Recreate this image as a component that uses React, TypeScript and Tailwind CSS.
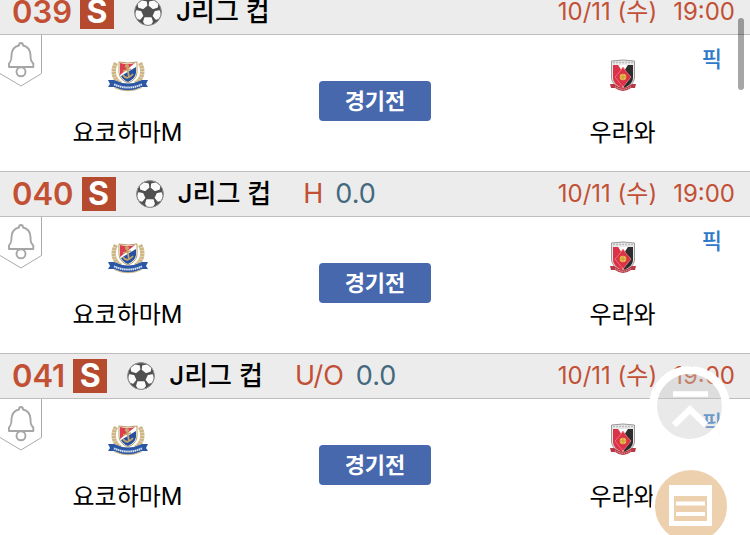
import React from "react";

type Match = { id: string; league: string; kind?: string; line?: string };

const matches: Match[] = [
  { id: "039", league: "J리그 컵" },
  { id: "040", league: "J리그 컵", kind: "H", line: "0.0" },
  { id: "041", league: "J리그 컵", kind: "U/O", line: "0.0" },
];

function Ball() {
  return (
    <svg viewBox="0 0 28 28" className="h-7 w-7 shrink-0" aria-hidden="true">
      <circle cx="14" cy="14" r="13.5" fill="#505050" />
      <g fill="#fafafa" stroke="#fafafa" strokeWidth="1.8" strokeLinejoin="round">
        <path d="M8 3.4 12 4.2 12.4 7.4 8.800 10.2 5 9 4.600 6Z" />
        <path d="M20 3.4 16 4.2 15.6 7.4 19.200 10.2 23 9 23.400 6Z" />
        <path d="M2.8 13.2 6.600 13.8 8.400 17.8 6 20.8 3.600 19.800 2 16.4Z" />
        <path d="M25.2 13.2 21.4 13.8 19.600 17.8 22 20.8 24.400 19.800 26 16.4Z" />
        <path d="M11 20.2H17L18 23.800 16.400 26H11.600L10 23.800Z" />
      </g>
      <circle cx="14" cy="14" r="13.4" fill="none" stroke="#909090" strokeWidth="1" />
    </svg>
  );
}

function YokohamaCrest() {
  return (
    <svg viewBox="0 0 42 32" className="h-8 w-[42px]" role="img" aria-label="요코하마M">
      <g fill="none" stroke="#cdb683" strokeWidth="4.4" strokeDasharray="2.6 .4">
        <path d="M9 3C5 10 6 19 14 24" />
        <path d="M33 3C37 10 36 19 28 24" />
      </g>
      <path d="M12 2Q21 4 30 2V13Q29 20 21 23Q13 20 12 13Z" fill="#fff" stroke="#b69a60" strokeWidth="1" />
      <path d="M13 3Q21 5 28 3L13 15Z" fill="#dc3e50" />
      <path d="M29 7V13Q28 19 21 22Q16 20 14 16Z" fill="#2550a0" />
      <g fill="none" stroke="#c6a769" strokeWidth="1.8">
        <path d="M20 6 22 17M16 11 24 9M16 15Q20 21 26 14" />
        <circle cx="20" cy="6" r="1.2" />
      </g>
      <path d="M1 20 7 20Q21 27 35 20L41 20 39 24 41 27 35 27Q21 34 7 27L1 27 3 24Z" fill="#2956a5" />
      <path d="M7 24.4Q21 30.6 35 24.4" fill="none" stroke="#dfe6f2" strokeWidth="2" strokeDasharray="1.6 .5" />
      <path d="M7 27.5Q21 34 35 27.5" fill="none" stroke="#c5ab75" strokeWidth=".9" />
    </svg>
  );
}

function UrawaCrest() {
  return (
    <svg viewBox="0 0 28 34" className="h-[34px] w-7" role="img" aria-label="우라와">
      <path d="M2.500 2Q14 0 25.500 2V19Q25 26 14 31Q3 26 2.500 19Z" fill="#e9e9e9" stroke="#9a9a9a" strokeWidth="1" />
      <path d="M4 6H9L13 12V29Q4 25 4 19Z" fill="#dc3247" />
      <path d="M19 6H24V19Q24 25 15 29V12Z" fill="#2d2d2d" />
      <path d="M10 6H18L15 12H13Z" fill="#fff" />
      <path d="M4 3.5H24" stroke="#bbb" strokeWidth="1.4" strokeDasharray="2 1" />
      <path d="M14 8 17.500 13 22 18 18 23 14 28 10 23 6 18 10.500 13Z" fill="#dc3247" stroke="#f07a86" strokeWidth=".8" />
      <circle cx="14" cy="18" r="3.3" fill="#e6bd4a" />
      <path d="M11 18H17M14 15V21" stroke="#c08a35" strokeWidth=".6" />
      <path d="M1 25 5 25Q14 32 23 25L27 25 26 29 22 29Q14 35 6 29L2 29Z" fill="#b83945" />
      <path d="M6 27.5Q14 33 22 27.5" fill="none" stroke="#e3b3b3" strokeWidth="1" strokeDasharray="1.5 .8" />
    </svg>
  );
}

function AlarmButton() {
  return (
    <button type="button" aria-label="알림" className="absolute left-0 top-0 h-[52px] w-[43px]">
      <svg viewBox="0 0 43 52" className="h-[52px] w-[43px]" fill="none">
        <path d="M41.5 0V38.500L21 51 0 38.500" stroke="#aaa" strokeWidth="1" />
        <g stroke="#a6a6a6" strokeWidth="1.9" strokeLinejoin="round">
          <path d="M19 10.500Q19 8 21 8Q23 8 23 10.500Q30 12 30.500 20C30.500 25 31 26 33.300 28.500V32H9V28.500C11 26 11.500 25 11.500 20Q12 12 19 10.500Z" />
          <circle cx="21" cy="36.800" r="4.500" />
        </g>
      </svg>
    </button>
  );
}

function Team({ name, children }: { name: string; children: React.ReactNode }) {
  return (
    <div className="flex flex-col items-center pt-6">
      <div className="flex h-[34px] items-center">{children}</div>
      <p className="mt-5 text-2xl leading-10 text-black">{name}</p>
    </div>
  );
}

function MatchRow({ match }: { match: Match }) {
  return (
    <article>
      <header className="flex h-[46px] items-center border-y border-[#bdbdbd] bg-[#ececec] pr-[15px] pl-3 whitespace-nowrap">
        <span className="text-[31px] leading-10 font-semibold text-[#c25035]">{match.id}</span>
        <span className="ml-2 flex h-[34px] w-[34px] items-center justify-center bg-[#b64a2e] text-[32px] leading-none font-bold text-white">
          S
        </span>
        <span className="ml-5">
          <Ball />
        </span>
        <h2 className="ml-3.5 text-[26px] leading-10 font-medium text-black">{match.league}</h2>
        {match.kind && (
          <p className="ml-8 flex gap-3 text-[27px] leading-10">
            <span className="text-[#c25035]">{match.kind}</span>
            <span className="text-[#43697f]">{match.line}</span>
          </p>
        )}
        <p className="ml-auto flex gap-4 text-2xl leading-10 text-[#c25035]">
          <span>10/11 (수)</span>
          <time>19:00</time>
        </p>
      </header>
      <div className="relative grid h-[136px] grid-cols-[34%_32%_34%]">
        <AlarmButton />
        <Team name="요코하마M">
          <YokohamaCrest />
        </Team>
        <div className="flex justify-center pt-[46px]">
          <button
            type="button"
            className="flex h-10 w-28 items-center justify-center rounded bg-[#4768ad] text-[22px] leading-none font-bold text-white"
          >
            경기전
          </button>
        </div>
        <Team name="우라와">
          <UrawaCrest />
        </Team>
        <a href="#pick" className="absolute right-7 top-3 text-[22px] leading-6 font-medium text-[#3079c8]">
          픽
        </a>
      </div>
    </article>
  );
}

export default function App() {
  return (
    <div className="relative h-screen overflow-hidden bg-white font-['Inter','Noto_Sans_CJK_KR',sans-serif]">
      <main className="-mt-[11px]">
        {matches.map((m) => (
          <MatchRow key={m.id} match={m} />
        ))}
      </main>

      <div className="absolute right-1.5 top-[18px] h-[72px] w-1.5 rounded-full bg-black/35" />

      <button
        type="button"
        aria-label="맨 위로"
        className="absolute right-5 top-[366px] h-[81px] w-[81px] rounded-full border-8 border-white"
      >
        <span className="flex h-full w-full items-center justify-center rounded-full bg-[#c8c8c8]/40">
          <svg viewBox="0 0 64 64" className="h-16 w-16" fill="none" stroke="#fff">
            <path d="M15 19H50" strokeWidth="5.500" />
            <path d="M16 50 32 34.500 48 50" strokeWidth="6.500" />
          </svg>
        </span>
      </button>

      <button
        type="button"
        aria-label="목록"
        className="absolute right-[19px] top-[466px] flex h-20 w-20 items-center justify-center rounded-full border-4 border-white bg-[#edd1ae]"
      >
        <svg viewBox="0 0 72 72" className="h-[72px] w-[72px]" fill="none">
          <path d="M14 15H57V56H14Z" fill="#fff" />
          <path d="M19 20H52V51H19Z" fill="#edd1ae" />
          <path d="M19 20H52V26H19Z" fill="#fff" />
          <path d="M21 33.500H50M21 44H50" stroke="#fff" strokeWidth="4" />
        </svg>
      </button>
    </div>
  );
}
